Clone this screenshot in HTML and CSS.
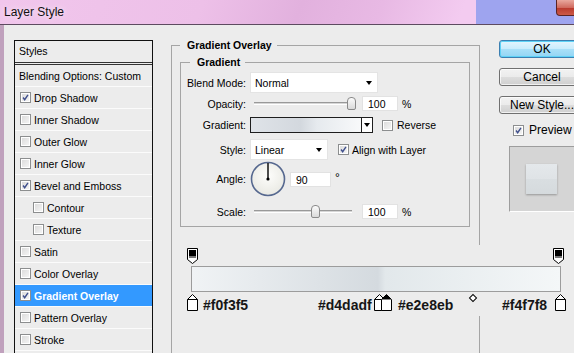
FILE: index.html
```html
<!DOCTYPE html>
<html lang="en">
<head>
  <meta charset="UTF-8" />
  <meta name="viewport" content="width=device-width, initial-scale=1.0" />
  <title>Layer Style</title>
  <link rel="stylesheet" href="styles.css">
</head>
<body>
  <div class="titlebar">
    <span class="title">Layer Style</span>
    <span class="close-btn"></span>
  </div>

  <div class="dialog">
    <div class="styles-list">
      <div class="list-head">Styles</div>
      <div class="list-row plain">Blending Options: Custom</div>
      <div class="list-row"><span class="check"><svg viewBox="0 0 11 11"><path d="M2.5 5.5L4.5 8.2L8.5 2.2" /></svg></span>Drop Shadow</div>
      <div class="list-row"><span class="check"></span>Inner Shadow</div>
      <div class="list-row"><span class="check"></span>Outer Glow</div>
      <div class="list-row"><span class="check"></span>Inner Glow</div>
      <div class="list-row"><span class="check"><svg viewBox="0 0 11 11"><path d="M2.5 5.5L4.5 8.2L8.5 2.2" /></svg></span>Bevel and Emboss</div>
      <div class="list-row sub"><span class="check"></span>Contour</div>
      <div class="list-row sub"><span class="check"></span>Texture</div>
      <div class="list-row"><span class="check"></span>Satin</div>
      <div class="list-row"><span class="check"></span>Color Overlay</div>
      <div class="list-row active"><span class="check"><svg viewBox="0 0 11 11"><path d="M2.5 5.5L4.5 8.2L8.5 2.2" /></svg></span>Gradient Overlay</div>
      <div class="list-row"><span class="check"></span>Pattern Overlay</div>
      <div class="list-row"><span class="check"></span>Stroke</div>
    </div>

    <div class="main-col">
      <fieldset class="group outer">
        <legend>Gradient Overlay</legend>

        <fieldset class="group inner">
          <legend>Gradient</legend>

          <div class="field-row row-blend">
            <span class="lbl">Blend Mode:</span>
            <div class="select blend-select">Normal<span class="arrow"></span></div>
          </div>

          <div class="field-row row-opacity">
            <span class="lbl">Opacity:</span>
            <div class="slider">
              <div class="track">
                <span class="thumb" style="left: 100%"></span>
              </div>
            </div>
            <div class="num-input">100</div>
            <span>%</span>
          </div>

          <div class="field-row row-gradient">
            <span class="lbl">Gradient:</span>
            <div class="grad-picker">
              <div class="grad-preview"></div>
              <div class="grad-drop"><span class="arrow"></span></div>
            </div>
            <span class="check spaced"></span>
            <span>Reverse</span>
          </div>

          <div class="field-row row-style">
            <span class="lbl">Style:</span>
            <div class="select style-select">Linear<span class="arrow"></span></div>
            <span class="check spaced-lg"><svg viewBox="0 0 11 11"><path d="M2.5 5.5L4.5 8.2L8.5 2.2" /></svg></span>
            <span>Align with Layer</span>
          </div>

          <div class="field-row row-angle">
            <span class="lbl">Angle:</span>
            <svg class="dial" width="36" height="36" viewBox="0 0 36 36">
              <defs>
                <radialGradient id="dialFill" cx="50%" cy="40%" r="60%">
                  <stop offset="0%" stop-color="#fdfdfb" />
                  <stop offset="100%" stop-color="#e9e9e3" />
                </radialGradient>
              </defs>
              <circle cx="18" cy="18" r="16.5" fill="url(#dialFill)" stroke="#56688f" stroke-width="1.6" />
              <line x1="18" y1="18" x2="18" y2="2" stroke="#000" stroke-width="1.4" />
              <circle cx="18" cy="18" r="1.6" fill="#000" />
            </svg>
            <div class="num-input angle-input">90</div>
            <span class="deg">°</span>
          </div>

          <div class="field-row row-scale">
            <span class="lbl">Scale:</span>
            <div class="slider">
              <div class="track">
                <span class="thumb" style="left: 63%"></span>
              </div>
            </div>
            <div class="num-input">100</div>
            <span>%</span>
          </div>
        </fieldset>

        <div class="grad-editor">
          <div class="stop-track top">
            <span class="marker" style="left: 0%">
              <svg width="11" height="16" viewBox="0 0 11 16"><path d="M0.5 0.5H10.5V11.5L5.5 15.5L0.5 11.5Z" fill="#fff" stroke="#000" /><rect x="2" y="2" width="7" height="6" fill="#000" /><rect x="2" y="8" width="7" height="2" fill="#777" /></svg>
            </span>
            <span class="marker" style="left: 99.5%">
              <svg width="11" height="16" viewBox="0 0 11 16"><path d="M0.5 0.5H10.5V11.5L5.5 15.5L0.5 11.5Z" fill="#fff" stroke="#000" /><rect x="2" y="2" width="7" height="6" fill="#000" /><rect x="2" y="8" width="7" height="2" fill="#777" /></svg>
            </span>
          </div>

          <div class="grad-bar"></div>

          <div class="stop-track bottom">
            <span class="marker" style="left: 0%">
              <svg width="11" height="17" viewBox="0 0 11 17"><path d="M5.5 0.5L10.5 5.5V16.5H0.5V5.5Z" fill="#fff" stroke="#000" /><path d="M0.5 5.5H10.5" stroke="#000" /></svg>
            </span>
            <span class="marker" style="left: 50.8%">
              <svg width="11" height="17" viewBox="0 0 11 17"><path d="M5.5 0.5L10.5 5.5V16.5H0.5V5.5Z" fill="#fff" stroke="#000" /><path d="M0.5 5.5H10.5" stroke="#000" /></svg>
            </span>
            <span class="marker" style="left: 52.7%">
              <svg width="11" height="17" viewBox="0 0 11 17"><path d="M5.5 0.5L10.5 5.5V16.5H0.5V5.5Z" fill="#fff" stroke="#000" /><path d="M5.5 0.5L10.5 5.5H0.5Z" fill="#000" /></svg>
            </span>
            <span class="marker" style="left: 100%">
              <svg width="11" height="17" viewBox="0 0 11 17"><path d="M5.5 0.5L10.5 5.5V16.5H0.5V5.5Z" fill="#fff" stroke="#000" /><path d="M0.5 5.5H10.5" stroke="#000" /></svg>
            </span>

            <span class="midpoint" style="left: 278px"></span>

            <span class="hex" style="left: 11px">#f0f3f5</span>
            <span class="hex" style="left: 126px">#d4dadf</span>
            <span class="hex" style="left: 206px">#e2e8eb</span>
            <span class="hex" style="left: 310px">#f4f7f8</span>
          </div>
        </div>
      </fieldset>
    </div>

    <div class="side-col">
      <button class="btn ok">OK</button>
      <button class="btn">Cancel</button>
      <button class="btn">New Style...</button>
      <div class="preview-row">
        <span class="check"><svg viewBox="0 0 11 11"><path d="M2.5 5.5L4.5 8.2L8.5 2.2" /></svg></span>
        <span>Preview</span>
      </div>
      <div class="preview-box">
        <div class="swatch"></div>
      </div>
    </div>
  </div>
</body>
</html>
```

FILE: styles.css
```css
* {
  box-sizing: border-box;
}

body {
  margin: 0;
  width: 574px;
  height: 353px;
  overflow: hidden;
  background-color: #ececec;
  font-family: "Liberation Sans", Arial, sans-serif;
  font-size: 10.5px;
  color: #000;
}

/* window chrome */
.titlebar {
  height: 25px;
  display: flex;
  justify-content: space-between;
  align-items: flex-start;
  border-bottom: 1px solid #5d4b60;
  background:
    linear-gradient(90deg, rgba(158, 164, 239, 0) 83%, #9ea4ef 83%),
    linear-gradient(110deg, #f1c6ec 0%, #edc0e8 35%, #e2b1de 52%, #e8b9e4 66%, #f3cbf0 80%);
}

.title {
  padding-left: 4px;
  line-height: 24px;
  font-size: 12px;
  color: #111;
  text-shadow: 0 0 6px rgba(255, 255, 255, 0.9);
}

.close-btn {
  width: 36px;
  height: 16px;
  margin-right: -18px;
  border: 1px solid #5b2424;
  border-top: none;
  border-radius: 0 0 4px 4px;
  background: linear-gradient(#e9a89e, #d06b5f 50%, #b8382c 51%, #cc5a48);
}

.dialog {
  display: flex;
  align-items: flex-start;
  height: 328px;
  padding-top: 15px;
  border-left: 4px solid #c0a1bd;
}

/* styles list */
.styles-list {
  flex-shrink: 0;
  width: 139px;
  height: 330px;
  margin-left: 10px;
  border: 1px solid #111;
  border-bottom: none;
}

.list-head {
  height: 24px;
  padding-left: 4px;
  line-height: 21px;
  border-bottom: 3px double #333;
}

.list-row {
  display: flex;
  align-items: center;
  gap: 3px;
  height: 22px;
  padding-left: 5px;
  border-bottom: 1px solid #fbfbfb;
}

.list-row.plain {
  padding-left: 4px;
}

.list-row.sub {
  padding-left: 18px;
}

.list-row.active {
  background-color: #3399ff;
  color: #fff;
  font-weight: bold;
}

.check {
  flex-shrink: 0;
  display: inline-block;
  width: 11px;
  height: 11px;
  border: 1px solid #8c8e8f;
  background: linear-gradient(135deg, #d9d9d9, #f7f7f7);
  box-shadow: inset 0 0 0 1px #fff;
}

.check svg {
  display: block;
  width: 9px;
  height: 9px;
}

.check path {
  fill: none;
  stroke: #3f4f8c;
  stroke-width: 1.7;
}

/* middle column */
.main-col {
  flex-shrink: 0;
  width: 309px;
  margin-left: 18px;
}

.group {
  margin: 0;
  min-width: 0;
  border: 1px solid #a5a5a5;
}

.group legend {
  padding: 0 5px 0 7px;
  line-height: 11px;
  font-weight: bold;
}

.group.outer {
  height: 330px;
  padding: 6px 9px 0 8px;
}

.group.inner {
  padding: 4px 8px 7px 9px;
}

.field-row {
  display: flex;
  align-items: center;
  gap: 4px;
}

.lbl {
  flex-shrink: 0;
  width: 66px;
  margin-left: -10px;
  text-align: right;
  white-space: nowrap;
}

.row-blend {
  height: 21px;
}

.row-opacity {
  height: 15px;
  margin-top: 3px;
}

.row-gradient {
  height: 16px;
  margin-top: 6px;
}

.row-style {
  height: 21px;
  margin-top: 6px;
}

.row-angle {
  height: 36px;
  margin-top: 1px;
}

.row-scale {
  height: 15px;
  margin-top: 7px;
}

.select {
  display: flex;
  align-items: center;
  justify-content: space-between;
  height: 21px;
  padding: 1px 5px 0 4px;
  background-color: #fff;
  border: 1px solid #e4e4e4;
}

.blend-select {
  width: 128px;
}

.style-select {
  width: 78px;
}

.arrow {
  width: 0;
  height: 0;
  border-left: 3.5px solid transparent;
  border-right: 3.5px solid transparent;
  border-top: 4px solid #000;
}

.slider {
  width: 108px;
  height: 15px;
  padding: 0 6px 0 4px;
  display: flex;
  align-items: center;
}

.track {
  position: relative;
  width: 100%;
  height: 3px;
  border-top: 1px solid #999;
  border-bottom: 1px solid #fff;
  background-color: #d6d6d6;
}

.thumb {
  position: absolute;
  top: -6px;
  width: 9px;
  height: 13px;
  margin-left: -5px;
  border: 1px solid #8a8a8a;
  border-radius: 4px 4px 2px 2px;
  background: linear-gradient(#fbfbfb, #dadada);
}

.num-input {
  width: 36px;
  height: 15px;
  padding: 1px 0 0 5px;
  line-height: 12px;
  background-color: #fff;
  border: 1px solid #e2e2e2;
}

.angle-input {
  width: 41px;
}

.deg {
  align-self: flex-start;
  margin-top: 10px;
  font-size: 12px;
}

.grad-picker {
  display: flex;
  width: 123px;
  height: 16px;
  border: 1px solid #1e1e1e;
}

.grad-preview {
  flex: 1;
  background: linear-gradient(90deg, #dfe3e8 0%, #d3d8de 45%, #e6eaee 60%, #f8f9fa 100%);
}

.grad-drop {
  display: flex;
  align-items: center;
  justify-content: center;
  width: 11px;
  border-left: 1px solid #1e1e1e;
  background-color: #fff;
}

.spaced {
  margin-left: 5px;
}

.spaced-lg {
  margin-left: 6px;
  margin-right: -1px;
}

.dial {
  flex-shrink: 0;
}

/* gradient editor strip */
.grad-editor {
  position: relative;
  height: 71px;
  margin-top: 18px;
  margin-right: -104px;
  padding-top: 3px;
  background-color: #ececec;
}

.stop-track {
  position: relative;
  width: 368px;
  margin-left: 12px;
}

.stop-track.top {
  height: 16px;
}

.stop-track.bottom {
  height: 20px;
  margin-top: 2px;
}

.marker {
  position: absolute;
  top: 0;
  margin-left: -5px;
  line-height: 0;
}

.grad-bar {
  width: 370px;
  height: 26px;
  margin: 2px 0 0 11px;
  border: 1px solid #9c9c9c;
  background: linear-gradient(90deg, #f0f3f5 0%, #dde2e6 35%, #d4dadf 50.5%, #e2e8eb 52.5%, #f4f7f8 100%);
}

.midpoint {
  position: absolute;
  top: 1px;
  width: 6px;
  height: 6px;
  border: 1px solid #000;
  background-color: #fff;
  transform: rotate(45deg);
}

.hex {
  position: absolute;
  top: 3px;
  font-size: 14px;
  line-height: 16px;
  font-weight: bold;
  color: #161616;
}

/* right column */
.side-col {
  flex-shrink: 0;
  display: flex;
  flex-direction: column;
  align-items: flex-start;
  width: 95px;
  margin-left: 19px;
}

.btn {
  width: 86px;
  height: 18px;
  margin: 0 0 10px 0;
  padding: 0;
  font-family: "Liberation Sans", Arial, sans-serif;
  font-size: 12px;
  color: #000;
  border: 1px solid #707070;
  border-radius: 3px;
  background: linear-gradient(#f2f2f2, #ebebeb 50%, #dddddd 51%, #cfcfcf);
  box-shadow: inset 0 0 0 1px rgba(255, 255, 255, 0.7);
}

.btn.ok {
  border-color: #3c7fb1;
  background: linear-gradient(#e4f5fd, #c9ecfc 50%, #a9e0f8 51%, #93d5f4);
  box-shadow: inset 0 0 0 1px #5ed2f6;
}

.preview-row {
  display: flex;
  align-items: center;
  gap: 5px;
  margin: -1px 0 0 14px;
  font-size: 12px;
}

.preview-box {
  width: 70px;
  height: 66px;
  margin: 9px 0 0 10px;
  padding: 17px 0 0 16px;
  border: 1px solid;
  border-color: #9d9d9d #fff #fff #9d9d9d;
  background-color: #d5d5d5;
}

.swatch {
  width: 31px;
  height: 30px;
  background: linear-gradient(#e4e8eb, #dfe3e6 50%, #d9dee1 51%, #d5dadd);
  box-shadow: 0 1px 2px rgba(0, 0, 0, 0.3);
}
```
